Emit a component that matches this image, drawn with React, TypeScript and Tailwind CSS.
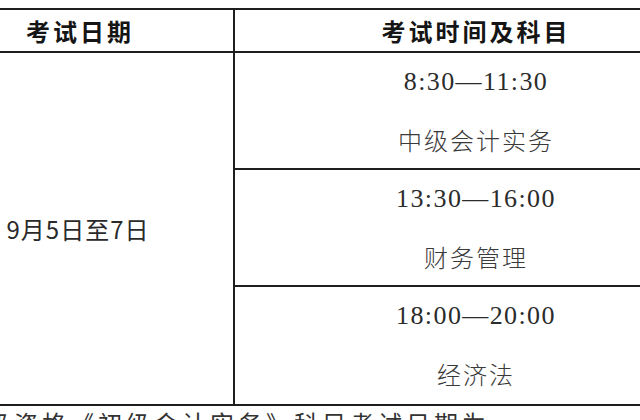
import React from "react";

const cjk = "font-['Noto_Sans_CJK_SC',sans-serif]";
const num = "font-['Liberation_Serif','Noto_Sans_CJK_SC',serif]";

const rows = [
  { time: "8:30—11:30", subject: "中级会计实务" },
  { time: "13:30—16:00", subject: "财务管理" },
  { time: "18:00—20:00", subject: "经济法" },
];

export default function App() {
  return (
    <div className="w-[640px] h-[420px] overflow-hidden bg-white">
      <div className="mt-[8px] ml-[-77px] w-[794px] border-t-2 border-b-2 border-[#1e1e1e]">
        <div className="flex h-[43px] border-b-2 border-[#1e1e1e]">
          <div className={`w-[312px] border-r-2 border-[#1e1e1e] flex items-center justify-center pl-[4px] text-[24px] font-bold tracking-[3px] text-[#151515] ${cjk}`}>
            考试日期
          </div>
          <div className={`flex-1 flex items-center justify-center text-[24px] font-bold tracking-[3px] text-[#151515] ${cjk}`}>
            考试时间及科目
          </div>
        </div>
        <div className="flex">
          <div className={`w-[312px] border-r-2 border-[#1e1e1e] flex items-center justify-center text-[24px] text-[#2a2a2a] tracking-[1px] ${cjk}`}>
            9月5日至7日
          </div>
          <div className="flex-1 flex flex-col">
            {rows.map((r, i) => (
              <div
                key={i}
                className={`h-[117px] flex flex-col items-center pt-[14px] gap-[28px] ${i < 2 ? "border-b-2 border-[#1e1e1e]" : ""}`}
              >
                <div className={`leading-[30px] text-[26px] tracking-[1.4px] text-[#2b2b2b] ${num}`}>{r.time}</div>
                <div className={`leading-[30px] text-[24px] font-light tracking-[2px] text-[#3a3a3a] ${cjk}`}>{r.subject}</div>
              </div>
            ))}
          </div>
        </div>
      </div>
      <div className={`mt-[5px] ml-[-14px] whitespace-nowrap leading-[24px] text-[24px] tracking-[4px] text-[#333] ${cjk}`}>
        级资格《初级会计实务》科目考试日期为
      </div>
    </div>
  );
}
